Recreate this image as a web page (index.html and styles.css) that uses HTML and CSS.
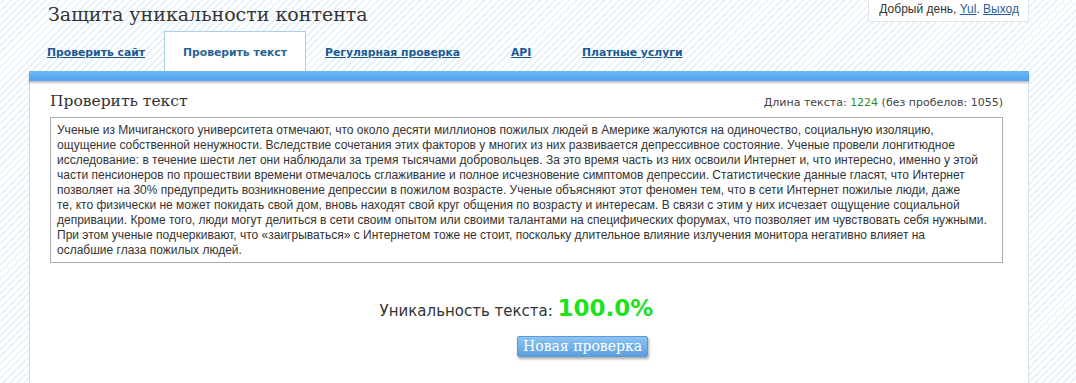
FILE: index.html
```html
<!DOCTYPE html>
<html lang="ru">
<head>
    <meta charset="UTF-8">
    <title>Защита уникальности контента</title>
    <link rel="stylesheet" href="styles.css">
</head>
<body>
    <div class="page">
        <div class="header">
            <div class="site-title">Защита уникальности контента</div>
            <div class="user-box">Добрый день, <a href="#">Yul</a>. <a href="#">Выход</a></div>
        </div>

        <ul class="tabs">
            <li><a href="#">Проверить сайт</a></li>
            <li class="active"><a href="#">Проверить текст</a></li>
            <li><a href="#">Регулярная проверка</a></li>
            <li><a href="#">API</a></li>
            <li><a href="#">Платные услуги</a></li>
        </ul>

        <div class="bar"></div>

        <div class="panel">
            <div class="panel-head">
                <h1>Проверить текст</h1>
                <div class="text-length">Длина текста: <span class="num">1224</span> (без пробелов: 1055)</div>
            </div>
            <div class="text-box">Ученые из Мичиганского университета отмечают, что около десяти миллионов пожилых людей в Америке жалуются на одиночество, социальную изоляцию,<br>
                ощущение собственной ненужности. Вследствие сочетания этих факторов у многих из них развивается депрессивное состояние. Ученые провели лонгитюдное<br>
                исследование: в течение шести лет они наблюдали за тремя тысячами добровольцев. За это время часть из них освоили Интернет и, что интересно, именно у этой<br>
                части пенсионеров по прошествии времени отмечалось сглаживание и полное исчезновение симптомов депрессии. Статистические данные гласят, что Интернет<br>
                позволяет на 30% предупредить возникновение депрессии в пожилом возрасте. Ученые объясняют этот феномен тем, что в сети Интернет пожилые люди, даже<br>
                те, кто физически не может покидать свой дом, вновь находят свой круг общения по возрасту и интересам. В связи с этим у них исчезает ощущение социальной<br>
                депривации. Кроме того, люди могут делиться в сети своим опытом или своими талантами на специфических форумах, что позволяет им чувствовать себя нужными.<br>
                При этом ученые подчеркивают, что «заигрываться» с Интернетом тоже не стоит, поскольку длительное влияние излучения монитора негативно влияет на<br>
                ослабшие глаза пожилых людей.</div>

            <div class="result">
                Уникальность текста: <span class="percent">100.0%</span>
            </div>
            <div class="actions">
                <button class="btn">Новая проверка</button>
            </div>
        </div>
    </div>
</body>
</html>
```

FILE: styles.css
```css
html, body {
    margin: 0;
    padding: 0;
    height: 100%;
}

body {
    font-family: "DejaVu Sans", Verdana, sans-serif;
    color: #333;
    background: repeating-linear-gradient(-45deg, #ffffff 0, #ffffff 3px, #eaf3f9 3px, #eaf3f9 5px);
    overflow: hidden;
}

.page {
    width: 1000px;
    margin-left: 29px;
    height: 100%;
    display: flex;
    flex-direction: column;
}

.header {
    display: flex;
    justify-content: space-between;
    align-items: flex-start;
    height: 31px;
}

.site-title {
    font-family: "DejaVu Serif", Georgia, serif;
    font-size: 19px;
    color: #333;
    margin-left: 19px;
    margin-top: 3px;
}

.user-box {
    background-color: #fff;
    border: 1px solid #dfe5ea;
    border-top: none;
    padding: 2px 9px 5px 10px;
    font-family: "Liberation Sans", Arial, sans-serif;
    font-size: 12px;
    color: #333;
}

.user-box a {
    color: #1f5f9b;
}

.tabs {
    list-style: none;
    margin: 0 0 0 -1px;
    padding: 0;
    display: flex;
    height: 40px;
}

.tabs li {
    box-sizing: border-box;
    min-width: 84px;
    padding: 0 18px;
    text-align: center;
    line-height: 38px;
    border: 1px solid transparent;
    border-bottom: none;
}

.tabs a {
    font-size: 10.8px;
    font-weight: bold;
    color: #1c5a94;
}

.tabs li.active {
    background-color: #fff;
    border-color: #a9d0ea;
}

.tabs li.active a {
    text-decoration: none;
    color: #2a6597;
}

.bar {
    height: 10px;
    background: linear-gradient(#6db8f8, #4fa2ec);
    box-shadow: 0 2px 2px rgba(0, 0, 0, 0.25);
    position: relative;
}

.panel {
    flex: 1;
    background-color: #fff;
    border-left: 1px solid #d4d8dc;
    border-right: 1px solid #d9e4ec;
    padding: 11px 25px 0 20px;
}

.panel-head {
    display: flex;
    justify-content: space-between;
    align-items: baseline;
    height: 25px;
}

.panel-head h1 {
    font-family: "DejaVu Serif", Georgia, serif;
    font-weight: normal;
    font-size: 15.5px;
    color: #333;
    margin: 0;
}

.text-length {
    font-family: "DejaVu Sans", Tahoma, sans-serif;
    font-size: 11px;
    color: #444;
}

.text-length .num {
    color: #2e8b2e;
}

.text-box {
    border: 1px solid #ababab;
    padding: 5px 6px 4px 6px;
    font-family: "Liberation Sans", Arial, sans-serif;
    font-size: 12px;
    line-height: 15px;
    color: #333;
    white-space: nowrap;
    overflow: hidden;
}

.result {
    text-align: center;
    margin-top: 32px;
    padding-right: 20px;
    font-size: 15px;
    color: #333;
}

.percent {
    font-weight: bold;
    font-size: 23px;
    color: #1de21d;
}

.actions {
    margin-top: 15px;
    padding-left: 467px;
}

.btn {
    font-family: "DejaVu Serif", Georgia, serif;
    font-size: 14px;
    line-height: 17px;
    color: #fff;
    border: 1px solid #5a9ad6;
    border-radius: 2px;
    padding: 1px 5px 1px 5px;
    background: linear-gradient(#8cc4f2, #5b9fe0);
    box-shadow: 1px 2px 3px rgba(0, 0, 0, 0.35);
}
```
